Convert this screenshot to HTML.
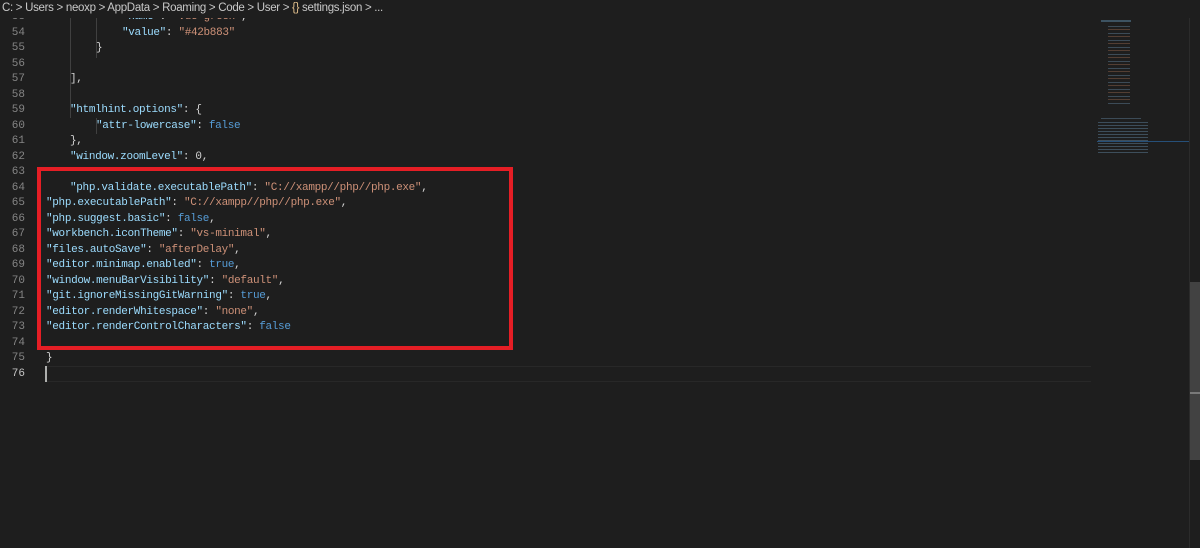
<!DOCTYPE html>
<html><head><meta charset="utf-8"><style>
body{margin:0;width:1200px;height:548px;background:#1e1e1e;overflow:hidden;position:relative;font-family:"Liberation Mono",monospace;}
.bc{position:absolute;left:0;top:0;width:1200px;height:18px;background:#1e1e1e;color:#c8c8c8;font:11.5px "Liberation Sans",sans-serif;letter-spacing:-0.3px;line-height:17px;padding-left:2px;z-index:5;white-space:nowrap}
.bc b{font-weight:normal;color:#e2c08d}
.ln{position:absolute;left:0;width:25px;text-align:right;color:#858585;font-size:11px;line-height:15.5px}
.c{position:absolute;font-size:11px;letter-spacing:-0.33px;line-height:15.5px;white-space:pre;color:#d4d4d4}
.k{color:#9cdcfe}.s{color:#ce9178}.b{color:#569cd6}
.g{position:absolute;width:1px;background:#404040}
</style></head><body>
<div class="bc">C: &gt; Users &gt; neoxp &gt; AppData &gt; Roaming &gt; Code &gt; User &gt; <b>{}</b> settings.json &gt; ...</div>

<div class="g" style="left:70px;top:18px;height:100px"></div>
<div class="g" style="left:96px;top:18px;height:40px"></div>
<div class="g" style="left:96px;top:118px;height:16px"></div>

<div class="ln" style="top:10px">53</div><div class="c" style="left:122px;top:10px"><span class="k">"name"</span>: <span class="s">"vue-green"</span>,</div>
<div class="ln" style="top:25.5px">54</div><div class="c" style="left:122px;top:25.5px"><span class="k">"value"</span>: <span class="s">"#42b883"</span></div>
<div class="ln" style="top:41px">55</div><div class="c" style="left:96px;top:41px">}</div>
<div class="ln" style="top:56.5px">56</div>
<div class="ln" style="top:72px">57</div><div class="c" style="left:70px;top:72px">],</div>
<div class="ln" style="top:87.5px">58</div>
<div class="ln" style="top:103px">59</div><div class="c" style="left:70px;top:103px"><span class="k">"htmlhint.options"</span>: {</div>
<div class="ln" style="top:118.5px">60</div><div class="c" style="left:96px;top:118.5px"><span class="k">"attr-lowercase"</span>: <span class="b">false</span></div>
<div class="ln" style="top:134px">61</div><div class="c" style="left:70px;top:134px">},</div>
<div class="ln" style="top:149.5px">62</div><div class="c" style="left:70px;top:149.5px"><span class="k">"window.zoomLevel"</span>: 0,</div>
<div class="ln" style="top:165px">63</div>
<div class="ln" style="top:180.5px">64</div><div class="c" style="left:70px;top:180.5px"><span class="k">"php.validate.executablePath"</span>: <span class="s">"C://xampp//php//php.exe"</span>,</div>
<div class="ln" style="top:196px">65</div><div class="c" style="left:46px;top:196px"><span class="k">"php.executablePath"</span>: <span class="s">"C://xampp//php//php.exe"</span>,</div>
<div class="ln" style="top:211.5px">66</div><div class="c" style="left:46px;top:211.5px"><span class="k">"php.suggest.basic"</span>: <span class="b">false</span>,</div>
<div class="ln" style="top:227px">67</div><div class="c" style="left:46px;top:227px"><span class="k">"workbench.iconTheme"</span>: <span class="s">"vs-minimal"</span>,</div>
<div class="ln" style="top:242.5px">68</div><div class="c" style="left:46px;top:242.5px"><span class="k">"files.autoSave"</span>: <span class="s">"afterDelay"</span>,</div>
<div class="ln" style="top:258px">69</div><div class="c" style="left:46px;top:258px"><span class="k">"editor.minimap.enabled"</span>: <span class="b">true</span>,</div>
<div class="ln" style="top:273.5px">70</div><div class="c" style="left:46px;top:273.5px"><span class="k">"window.menuBarVisibility"</span>: <span class="s">"default"</span>,</div>
<div class="ln" style="top:289px">71</div><div class="c" style="left:46px;top:289px"><span class="k">"git.ignoreMissingGitWarning"</span>: <span class="b">true</span>,</div>
<div class="ln" style="top:304.5px">72</div><div class="c" style="left:46px;top:304.5px"><span class="k">"editor.renderWhitespace"</span>: <span class="s">"none"</span>,</div>
<div class="ln" style="top:320px">73</div><div class="c" style="left:46px;top:320px"><span class="k">"editor.renderControlCharacters"</span>: <span class="b">false</span></div>
<div class="ln" style="top:335.5px">74</div>
<div class="ln" style="top:351px">75</div><div class="c" style="left:46px;top:351px">}</div>
<div class="ln" style="top:366.5px;color:#c6c6c6">76</div>
<div style="position:absolute;left:45px;top:366px;width:1046px;height:14px;border-top:1px solid #282828;border-bottom:1px solid #282828"></div>
<div style="position:absolute;left:45px;top:366px;width:2px;height:16px;background:#aeafad"></div>

<div style="position:absolute;left:37px;top:167px;width:468px;height:175px;border:4px solid #e51e25"></div>

<div style="position:absolute;left:1098px;top:18px;width:92px;height:124px;opacity:.7">
<div style="position:absolute;left:3px;top:2px;width:30px;height:2px;background:#4b6a80"></div>
<div style="position:absolute;left:10px;top:8px;width:22px;height:80px;background:repeating-linear-gradient(#4a5f70 0 1px,transparent 1px 3px,#6a4c3c 3px 4px,transparent 4px 7px)"></div>
<div style="position:absolute;left:3px;top:100px;width:40px;height:1px;background:#4a5f70"></div>
<div style="position:absolute;left:0;top:104px;width:50px;height:33px;background:repeating-linear-gradient(#4a6275 0 1px,transparent 1px 3px)"></div>
</div>
<div style="position:absolute;left:1097px;top:141px;width:93px;height:1px;background:#264f78"></div>
<div style="position:absolute;left:1189px;top:18px;width:1px;height:530px;background:#2b2b2b"></div>
<div style="position:absolute;left:1190px;top:282px;width:10px;height:178px;background:#424242"></div>
<div style="position:absolute;left:1190px;top:392px;width:10px;height:2px;background:#7a7a7a"></div>
</body></html>
